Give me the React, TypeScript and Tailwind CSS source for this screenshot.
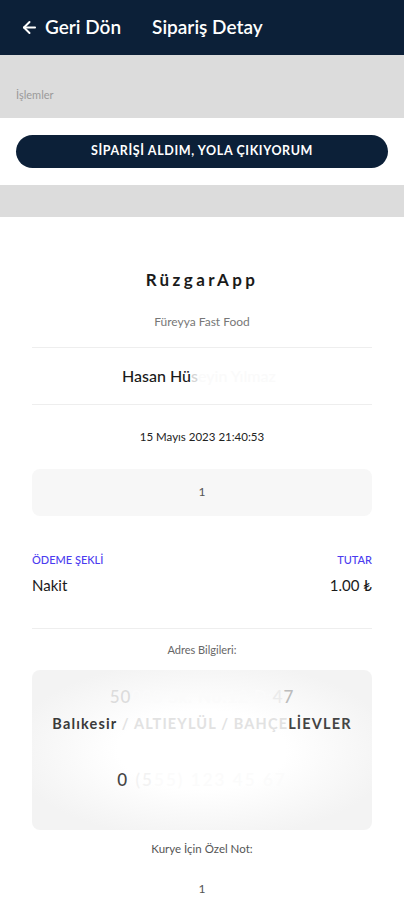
import { ArrowLeft } from 'lucide-react';

const font = { fontFamily: 'Lato, "Noto Sans", sans-serif' };

function Divider() {
  return <div className="mx-8 h-px bg-[#eeeeee]" />;
}

export default function App() {
  return (
    <div className="w-[404px] min-h-[900px] bg-white text-[#1a1a1a]" style={font}>
      <header className="flex h-[55px] items-center bg-[#0c2038] px-5 text-white shadow-[0_2px_3px_rgba(0,0,0,0.35)]">
        <ArrowLeft size={19} strokeWidth={2.5} />
        <span className="ml-1.5 text-[19px] font-semibold">Geri Dön</span>
        <span className="ml-[31px] text-[19px] font-semibold">Sipariş Detay</span>
      </header>

      <div className="flex h-[63px] items-end bg-[#dcdcdc] px-4 pb-[15px]">
        <span className="text-[11px] text-[#9a9a9a]">İşlemler</span>
      </div>

      <div className="flex h-[67px] items-center px-4">
        <button className="h-[33px] w-full rounded-full bg-[#0c2038] text-[12.5px] font-bold tracking-wider text-white">
          SİPARİŞİ ALDIM, YOLA ÇIKIYORUM
        </button>
      </div>

      <div className="h-[32px] bg-[#dcdcdc]" />

      <div className="flex flex-col pt-[50px]">
        <div className="text-center text-[17px] font-bold tracking-[0.2em]">RüzgarApp</div>
        <div className="mt-[20px] text-center text-[12px] text-[#777777]">Füreyya Fast Food</div>
        <div className="mt-[16px]">
          <Divider />
        </div>
        <div className="flex h-[56px] items-center pl-[122px] text-[16px] font-medium">
          <span>Hasan Hü</span>
          <span className="text-[#d4d4d4]">s</span>
          <span className="text-[#fafafa]">eyin Yılmaz</span>
        </div>
        <Divider />
        <div className="mt-[23px] text-center text-[11.5px] text-[#222222]">15 Mayıs 2023 21:40:53</div>

        <div className="mx-8 mt-[24px] flex h-[47px] items-center justify-center rounded-lg bg-[#f7f7f7] text-[12px] text-[#555555]">
          1
        </div>

        <div className="mx-8 mt-[36px] flex justify-between text-[11px] font-medium text-[#4b3cf0]">
          <span>ÖDEME ŞEKLİ</span>
          <span>TUTAR</span>
        </div>
        <div className="mx-8 mt-[6px] flex justify-between text-[15px]">
          <span>Nakit</span>
          <span>1.00 ₺</span>
        </div>

        <div className="mt-[31px]">
          <Divider />
        </div>
        <div className="mt-[13px] text-center text-[11px] text-[#666666]">Adres Bilgileri:</div>

        <div className="mx-8 mt-[12px] flex h-[160px] flex-col items-center rounded-lg bg-[radial-gradient(ellipse_at_center,#ffffff_35%,#f3f3f3_80%)] pt-[14px]">
          <div className="text-[17px] font-medium tracking-wider">
            <span className="text-[#dcdcdc]">50</span>
            <span className="text-[#fbfbfb]">000 Sk. No:12 D:</span>
            <span className="text-[#ebebeb]">4</span>
            <span className="text-[#bcbcbc]">7</span>
          </div>
          <div className="mt-[3px] text-[14.5px] font-bold tracking-[0.08em]">
            <span className="text-[#3a3a3a]">Balıkesir</span>
            <span className="text-[#e2e2e2]"> / ALTIEYLÜL / BAHÇE</span>
            <span className="text-[#444444]">LİEVLER</span>
          </div>
          <div className="mt-[32px] text-[17px] font-medium tracking-[0.12em]">
            <span className="text-[#444444]">0 </span>
            <span className="text-[#f2f2f2]">(5</span>
            <span className="text-[#fbfbfb]">55) 123 45 67</span>
          </div>
        </div>

        <div className="mt-[10px] text-center text-[11.5px] text-[#555555]">Kurye İçin Özel Not:</div>
        <div className="mt-[22px] text-center text-[12px] text-[#555555]">1</div>
      </div>
    </div>
  );
}
